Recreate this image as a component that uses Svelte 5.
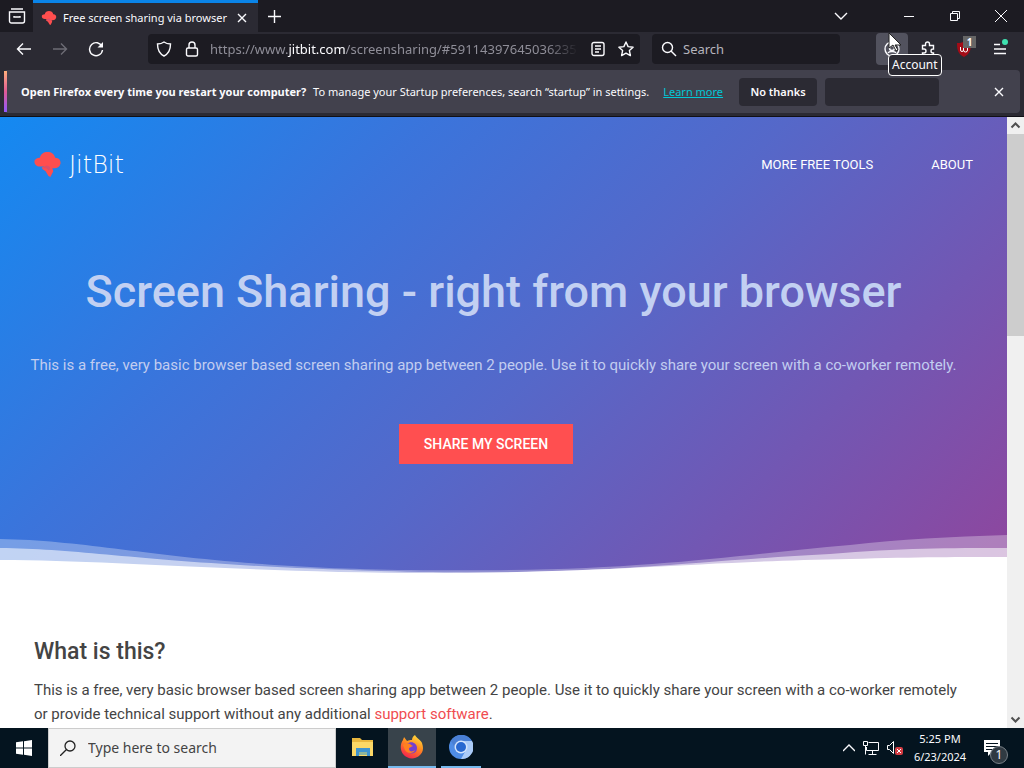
<script lang="ts">
  let address = $state('https://www.jitbit.com/screensharing/#591143976450362359')
  let editing = $state(false)
  let query = $state('')
  let taskQuery = $state('')
</script>

<svelte:head>
  <title>Free screen sharing via browser</title>
</svelte:head>

{#snippet cloud()}
  <svg class="cloud" viewBox="0 0 28 30" aria-hidden="true">
    <path d="M6 8C7 4 10 2 14 2s7 2 8 6c4 0 6 3 5.500 6-.500 3-3 5-6.500 5h-2l1 3-3 6-2-1-3-5-3-2-1-2 3-1H6c-3 0-6-2-5.500-6C1 10 3 8 6 8z" fill="#fe4e4e" />
    <path d="M9 19l4-3 3 1 1 3-2 1-2-2z" fill="#b85088" opacity=".5" />
  </svg>
{/snippet}

<div class="screen">
  <header class="browser">
    <div class="tabs">
      <button class="view" aria-label="Firefox View">
        <svg width="18" height="18" viewBox="0 0 18 18" class="line">
          <path d="M3 2h12M1.500 5h15v9a2 2 0 0 1-2 2h-11a2 2 0 0 1-2-2V5zM6 9v1h6V9" />
        </svg>
      </button>
      <div class="tab">
        <span class="favicon">{@render cloud()}</span>
        <span class="tab-title">Free screen sharing via browser</span>
        <button class="tab-close" aria-label="Close tab">
          <svg width="10" height="10" viewBox="0 0 10 10" class="line"><path d="M1 1l8 8M9 1l-8 8" /></svg>
        </button>
      </div>
      <button class="new-tab" aria-label="New tab">
        <svg width="13" height="13" viewBox="0 0 13 13" class="line"><path d="M6.500 0v13M0 6.500h13" /></svg>
      </button>
      <button class="list-tabs" aria-label="List all tabs">
        <svg width="14" height="8" viewBox="0 0 14 8" class="line"><path d="M1 1l6 6 6-6" /></svg>
      </button>
      <div class="window-controls">
        <button aria-label="Minimize"><svg width="12" height="12" viewBox="0 0 12 12" class="thin"><path d="M1 6.500h10" /></svg></button>
        <button aria-label="Restore"><svg width="12" height="12" viewBox="0 0 12 12" class="thin"><path d="M1.500 3.500h7v7h-7zM3.500 3.500v-2h7v7h-2" /></svg></button>
        <button aria-label="Close"><svg width="12" height="12" viewBox="0 0 12 12" class="thin"><path d="M0 0l12 12M12 0L0 12" /></svg></button>
      </div>
    </div>

    <div class="toolbar">
      <nav class="history" aria-label="History">
        <button aria-label="Back"><svg width="16" height="16" viewBox="0 0 16 16" class="line"><path d="M15 8H2M7 2.500L1.500 8 7 13.500" /></svg></button>
        <button aria-label="Forward" disabled><svg width="16" height="16" viewBox="0 0 16 16" class="line"><path d="M1 8h13M9 2.500L14.500 8 9 13.500" /></svg></button>
        <button aria-label="Reload"><svg width="16" height="16" viewBox="0 0 16 16" class="line"><path d="M14 5.500A6.500 6.500 0 1 0 14.500 9" /><path d="M15 1v5.500H9.500z" fill="currentColor" stroke="none" /></svg></button>
      </nav>
      <form class="address" onsubmit={(e) => e.preventDefault()}>
        <svg width="16" height="16" viewBox="0 0 16 16" class="line"><path d="M8 1c2 1.500 4 2 6.500 2 0 6-1.500 9.500-6.500 12C3 12.500 1.500 9 1.500 3 4 3 6 2.500 8 1z" /></svg>
        <svg width="16" height="16" viewBox="0 0 14 16" class="line"><rect x="1.500" y="7" width="11" height="8" rx="1.500" /><path d="M4 7V4a3 3 0 0 1 6 0v3" /></svg>
        <div class="url">
          {#if !editing}
            <span class="url-text">https://www.<b>jitbit.com</b>/screensharing/#591143976450362359</span>
          {/if}
          <input
            type="text"
            aria-label="Address"
            value={editing ? address : ''}
            oninput={(e) => (address = e.currentTarget.value)}
            onfocus={() => (editing = true)}
            onblur={() => (editing = false)}
          />
        </div>
        <button type="button" aria-label="Reader view"><svg width="14" height="16" viewBox="0 0 14 16" class="line"><rect x="1" y="1.500" width="12" height="13" rx="2" /><path d="M4 5h6M4 8h6M4 11h4" /></svg></button>
        <button type="button" aria-label="Bookmark"><svg width="16" height="16" viewBox="0 0 16 16" class="line"><path d="M8 1l2.100 4.600 5 .6-3.700 3.400 1 5L8 12.100l-4.400 2.500 1-5L.9 6.200l5-.6z" stroke-linejoin="round" /></svg></button>
      </form>
      <label class="find">
        <svg width="16" height="16" viewBox="0 0 16 16" class="line"><circle cx="6.500" cy="6.500" r="5" /><path d="M10 10l5 5" /></svg>
        <input type="text" placeholder="Search" aria-label="Search" bind:value={query} />
      </label>
      <div class="actions">
        <button class="account hover" aria-label="Account">
          <svg width="16" height="16" viewBox="0 0 16 16" class="line"><circle cx="8" cy="8" r="7" /><circle cx="8" cy="7" r="2.500" /><path d="M4 12c1-2 7-2 8 0" /></svg>
          <span class="tooltip">Account</span>
          <svg class="pointer" width="14" height="20" viewBox="0 0 14 20"><path d="M1 1v15l4-3 3 6 2-1-3-5h6z" fill="#fff" stroke="#222" /></svg>
        </button>
        <button aria-label="Extensions"><svg width="16" height="16" viewBox="0 0 16 16" class="line"><path d="M5.500 4.500V3a2 2 0 0 1 4 0v1.500h4V8h-.500a2 2 0 0 0 0 4h.500v3h-11v-3H4a2 2 0 0 0 0-4H2.500V4.500z" /></svg></button>
        <button class="blocker" aria-label="uBlock Origin">
          <svg width="16" height="16" viewBox="0 0 16 16"><path d="M8 0c2 2 4 2 7 2 0 7-1 11-7 14C2 13 1 9 1 2c3 0 5 0 7-2z" fill="#a30c17" /><path d="M4.500 6v3a1.500 1.500 0 0 0 3 0V6v3a1.500 1.500 0 0 0 4 0V6.500" fill="none" stroke="#fff" /></svg>
          <span class="count">1</span>
        </button>
        <button class="menu" aria-label="Menu"><svg width="14" height="12" viewBox="0 0 14 12" class="line"><path d="M1 1.500h6M1 6h12M1 10.500h12" /></svg><span class="dot"></span></button>
      </div>
    </div>

    <div class="notice">
      <p><strong>Open Firefox every time you restart your computer?</strong> To manage your Startup preferences, search “startup” in settings.</p>
      <a href="#learn">Learn more</a>
      <button class="choice">No thanks</button>
      <button class="choice blank" aria-label="Open Firefox automatically"></button>
      <button class="dismiss" aria-label="Dismiss"><svg width="10" height="10" viewBox="0 0 10 10" class="line"><path d="M1 1l8 8M9 1L1 9" /></svg></button>
    </div>
  </header>

  <div class="viewport">
    <main>
      <section class="hero">
        <div class="site-bar">
          <a class="brand" href="#home">{@render cloud()}<span>JitBit</span></a>
          <nav>
            <a href="#tools">MORE FREE TOOLS</a>
            <a href="#about">ABOUT</a>
          </nav>
        </div>
        <div class="intro">
          <h1>Screen Sharing - right from your browser</h1>
          <p>This is a free, very basic browser based screen sharing app between 2 people. Use it to quickly share your screen with a co-worker remotely.</p>
          <button class="share">SHARE MY SCREEN</button>
        </div>
        <svg class="waves" viewBox="0 0 1007 40" preserveAspectRatio="none" aria-hidden="true">
          <path d="M0 5C110 7 180 33 410 36S720 22 850 11C900 5 950 3 1007 1V40H0z" fill="#fff" opacity=".3" />
          <path d="M0 14C90 15 160 31 380 37S660 29 830 20C900 14 950 14 1007 14V40H0z" fill="#fff" opacity=".55" />
          <path d="M0 26C110 26 250 39 430 39S690 28 850 25C920 23 960 23 1007 23V40H0z" fill="#fff" />
        </svg>
      </section>
      <section class="about">
        <h2>What is this?</h2>
        <p>This is a free, very basic browser based screen sharing app between 2 people. Use it to quickly share your screen with a co-worker remotely or provide technical support without any additional <a href="#support">support software</a>.</p>
      </section>
    </main>
    <div class="scrollbar" aria-hidden="true">
      <svg width="17" height="17" viewBox="0 0 17 17"><path d="M4.500 10.500l4-4 4 4" /></svg>
      <div class="track"><div class="thumb"></div></div>
      <svg width="17" height="17" viewBox="0 0 17 17"><path d="M4.500 6.500l4 4 4-4" /></svg>
    </div>
  </div>

  <footer class="taskbar">
    <button class="start" aria-label="Start"><svg width="16" height="16" viewBox="0 0 16 16"><path d="M0 2.300L7 1.300v6.200H0zM8 1.200L16 0v7.500H8zM0 8.500h7v6.200l-7-1zM8 8.500h8V16l-8-1.200z" fill="#fff" /></svg></button>
    <label class="task-search">
      <svg width="16" height="16" viewBox="0 0 16 16"><circle cx="10" cy="6" r="5" /><path d="M6.500 9.500L0 16" /></svg>
      <input type="text" placeholder="Type here to search" aria-label="Type here to search" bind:value={taskQuery} />
    </label>
    <div class="apps">
      <button aria-label="File Explorer">
        <svg width="24" height="24" viewBox="0 0 24 24"><path d="M1 3h8l2 2h11v16H1z" fill="#e9b83f" /><path d="M1 7h21v14H1z" fill="#fbd867" /><path d="M5 13h14v8h-3v-4H8v4H5z" fill="#3f94cf" /><path d="M8 17h8v3H8z" fill="#8fb59b" /></svg>
      </button>
      <button class="current" aria-label="Firefox">
        <svg width="24" height="24" viewBox="0 0 24 24">
          <defs><linearGradient id="fox" x1=".8" y1="0" x2=".3" y2="1"><stop offset="0" stop-color="#ffe33f" /><stop offset=".45" stop-color="#ff8b20" /><stop offset="1" stop-color="#f5204f" /></linearGradient></defs>
          <path d="M3 5c0-1 1-2 1-3l3 4c2-1 3-1 5-1 0-2 1-4 3-5 1 3 6 5 7 8 2 6 1 10-3 13-5 4-12 3-16-2C0 15 0 9 3 5z" fill="url(#fox)" />
          <path d="M7 9c4-4 10-1 10 4s-5 7-9 4c-2-2-3-5-1-8z" fill="#7440cf" />
          <path d="M3 10c3-2 7-2 8 0l2 1c-1 1-4 1-4 3 0 3 4 3 6 1-1 4-8 4-10 0z" fill="#ff8020" />
        </svg>
      </button>
      <button class="running" aria-label="Chromium">
        <svg width="24" height="24" viewBox="0 0 24 24"><circle cx="12" cy="12" r="12" fill="#4f8de6" /><path d="M12 6h11a12 12 0 0 1-11 18l5-9z" fill="#aacbf8" /><path d="M2 6a12 12 0 0 1 21 0H12l-5 9z" fill="#4a80d5" /><circle cx="12" cy="12" r="6.500" fill="#d4e4fc" /><circle cx="12" cy="12" r="5" fill="#2868d0" /></svg>
      </button>
    </div>
    <div class="tray">
      <button aria-label="Show hidden icons"><svg width="12" height="8" viewBox="0 0 12 8" class="line"><path d="M0 7l6-6 6 6" /></svg></button>
      <button aria-label="Network"><svg width="16" height="14" viewBox="0 0 16 14" class="thin"><path d="M5.500 1.500h10v8H3.500V6M.500.500h4v4h-4zM2.500 4.500v9M9.500 9.500v4M5.500 13.500h8" /></svg></button>
      <button aria-label="Sound muted"><svg width="17" height="14" viewBox="0 0 17 14"><path d="M.500 4.500h2l4-4v12l-4-4h-2z" fill="none" stroke="#fff" /><rect x="8" y="6" width="8" height="8" rx="2" fill="#d33b42" /><path d="M10 8l4 4M14 8l-4 4" stroke="#fff" /></svg></button>
      <time datetime="2024-06-23T17:25"><span>5:25 PM</span><span>6/23/2024</span></time>
      <button class="messages" aria-label="1 notification">
        <svg width="16" height="16" viewBox="0 0 16 16"><path d="M0 0h16v12H8l-4 4v-4H0z" fill="#fff" /><path d="M2 3.500h12M2 6.500h12M2 9.500h9" stroke="#04141f" /></svg>
        <span>1</span>
      </button>
    </div>
  </footer>
</div>

<style>
  :global(body) { margin: 0; overflow: hidden; }
  * { box-sizing: border-box; }
  .screen {
    display: flex;
    flex-direction: column;
    height: 100vh;
    font: 12px/16px "Noto Sans", "Open Sans", sans-serif;
    color: #fbfbfe;
  }
  button {
    display: flex;
    align-items: center;
    justify-content: center;
    padding: 0;
    border: 0;
    background: transparent;
    color: inherit;
    font: inherit;
  }
  input {
    width: 100%;
    min-width: 0;
    padding: 0;
    border: 0;
    outline: 0;
    background: transparent;
    color: inherit;
    font: inherit;
  }
  svg { flex: none; }
  .line { fill: none; stroke: currentColor; stroke-width: 1.4; }
  .thin { fill: none; stroke: currentColor; stroke-width: 1; }

  /* browser chrome */
  .browser { background: #2b2a33; border-bottom: 1px solid #111016; }
  .tabs { display: flex; height: 32px; background: #1c1b22; }
  .view { width: 33px; }
  .tab {
    display: flex;
    align-items: center;
    width: 225px;
    padding: 0 8px;
    border-top: 3px solid #0a84e8;
    background: #2b2a33;
  }
  .favicon { display: flex; width: 16px; margin-right: 6px; }
  .favicon .cloud { width: 16px; height: 16px; }
  .tab-title { flex: 1; font-size: 11px; white-space: nowrap; }
  .tab-close { width: 16px; height: 24px; }
  .new-tab { width: 33px; }
  .list-tabs { width: 36px; margin-left: auto; }
  .window-controls { display: flex; margin-left: 27px; }
  .window-controls button { width: 46px; }

  .toolbar { display: flex; align-items: center; height: 34px; padding: 0 8px; }
  .history { display: flex; gap: 4px; width: 140px; }
  .history button { width: 32px; height: 32px; }
  .history button:disabled { color: #6d6c75; }
  .address, .find {
    display: flex;
    align-items: center;
    height: 30px;
    border-radius: 4px;
    background: #1c1b22;
    font-size: 13px;
    line-height: 20px;
  }
  .address { flex: 1; gap: 12px; min-width: 0; padding: 0 6px 0 8px; }
  .address button { width: 16px; height: 28px; }
  .address .url { margin-left: -2px; }
  .url { position: relative; flex: 1; min-width: 0; overflow: hidden; }
  .url-text {
    display: block;
    overflow: hidden;
    color: #8f8e98;
    white-space: nowrap;
    mask-image: linear-gradient(to left, transparent, #000 32px);
  }
  .url-text b { color: #fbfbfe; font-weight: 400; }
  /* the field lies over the formatted address until it takes the focus */
  .url input { position: absolute; inset: 0; }
  .url input:focus { position: static; }
  .find { gap: 6px; width: 188px; margin: 0 36px 0 12px; padding: 0 9px; color: #c8c7ce; }
  .find svg { color: #fbfbfe; }
  .find input::placeholder { color: #b5b4bc; opacity: 1; }
  .actions { display: flex; gap: 4px; }
  .actions button { position: relative; width: 32px; height: 32px; }
  .actions .hover { border-radius: 4px; background: #52525e; }
  .tooltip {
    position: absolute;
    z-index: 2;
    top: 21px;
    left: 12px;
    padding: 2px 3px;
    border: 1px solid #fff;
    border-radius: 4px;
    background: #2b2a33;
  }
  .pointer { position: absolute; z-index: 3; top: -1px; left: 12px; }
  .count {
    position: absolute;
    top: 3px;
    right: 4px;
    width: 13px;
    height: 12px;
    background: #666;
    font-size: 10px;
    font-weight: 700;
    line-height: 12px;
  }
  .dot { position: absolute; top: 6px; right: 8px; width: 6px; height: 6px; border-radius: 50%; background: #3fe1b0; }

  .notice {
    display: flex;
    align-items: center;
    height: 43px;
    margin: 4px 4px 3px;
    padding: 0 12px 0 14px;
    border: 1px solid #53525e;
    border-left: 3px solid;
    border-image: linear-gradient(#ffb07c, #e05a94 50%, #9059ff) 0 0 0 3;
    border-radius: 4px;
    background: #42414d;
    font-size: 11px;
    white-space: nowrap;
  }
  .notice p { margin: 0; }
  .notice strong { margin-right: 4px; }
  .notice a { margin: 0 16px 0 14px; color: #00c8d7; }
  .choice { width: 78px; height: 28px; border-radius: 4px; background: #2b2a33; font-weight: 600; }
  .blank { width: 114px; margin-left: 8px; }
  .dismiss { width: 16px; height: 24px; margin-left: auto; }

  /* web page */
  .viewport { display: flex; flex: 1; min-height: 0; background: #fff; }
  main {
    flex: 1;
    overflow: hidden;
    color: #444;
    font: 15px/24px Roboto, sans-serif;
  }
  .hero {
    background: linear-gradient(135deg, #1489f1, #3b74db 30%, #5568c9 54%, #8f469d);
    color: #fff;
  }
  .site-bar {
    display: flex;
    align-items: center;
    justify-content: space-between;
    height: 95px;
    padding: 0 34px;
  }
  .site-bar nav { display: flex; gap: 58px; font-size: 13px; }
  .site-bar a { color: #fff; text-decoration: none; }
  .brand { display: flex; align-items: center; gap: 8px; font: 300 24px/32px "DejaVu Sans", Lato, sans-serif; }
  .cloud { width: 27px; height: 29px; }
  .intro { display: flex; flex-direction: column; align-items: center; padding: 48px 20px 0 0; }
  .intro h1 { margin: 0; color: #c2d0f2; font-size: 45px; font-weight: 500; line-height: 64px; white-space: nowrap; }
  .intro p { margin: 29px 0 0; color: #c2cdf0; white-space: nowrap; }
  .share {
    width: 174px;
    height: 40px;
    margin: 47px 15px 0 0;
    background: #ff4f50;
    font-size: 14px;
    font-weight: 500;
  }
  .waves { display: block; width: 100%; height: 40px; margin-top: 70px; }
  .about { padding: 62px 40px 0 34px; }
  .about h2 { margin: 0; font-size: 23px; font-weight: 500; line-height: 32px; }
  .about p { margin: 10px 0 0; }
  .about a { color: #f04c50; text-decoration: none; }

  .scrollbar { display: flex; flex-direction: column; width: 17px; background: #f0f0f0; }
  .scrollbar svg { fill: none; stroke: #505050; stroke-width: 2; }
  .track { flex: 1; }
  .thumb { height: 35%; background: #cdcdcd; }

  /* taskbar */
  .taskbar { display: flex; flex: none; height: 40px; background: #04141f; }
  .start { width: 48px; }
  .task-search {
    display: flex;
    align-items: center;
    gap: 12px;
    width: 288px;
    padding: 0 11px;
    border: 1px solid #ccc;
    background: #f3f3f3;
    color: #333;
    font-size: 14px;
    line-height: 20px;
  }
  .task-search svg { fill: none; stroke: #222; stroke-width: 1.3; }
  .task-search input::placeholder { color: #444; opacity: 1; }
  .apps { display: flex; gap: 1px; margin-left: 3px; }
  .apps button { width: 48px; border-bottom: 2px solid transparent; }
  .apps .current { border-color: #76b9ed; background: #38434b; }
  .apps .running { width: 40px; margin-left: 4px; border-color: #76b9ed; }
  .tray { display: flex; align-items: center; gap: 8px; margin-left: auto; padding-right: 20px; }
  .tray time { display: flex; flex-direction: column; align-items: center; width: 56px; font-size: 11px; line-height: 18px; }
  .messages { position: relative; width: 24px; height: 40px; margin-left: 4px; }
  .messages span {
    position: absolute;
    top: 18px;
    left: 10px;
    width: 18px;
    border: 1px solid #788087;
    border-radius: 50%;
    background: #303a42;
    font-size: 12px;
    line-height: 16px;
  }
</style>
